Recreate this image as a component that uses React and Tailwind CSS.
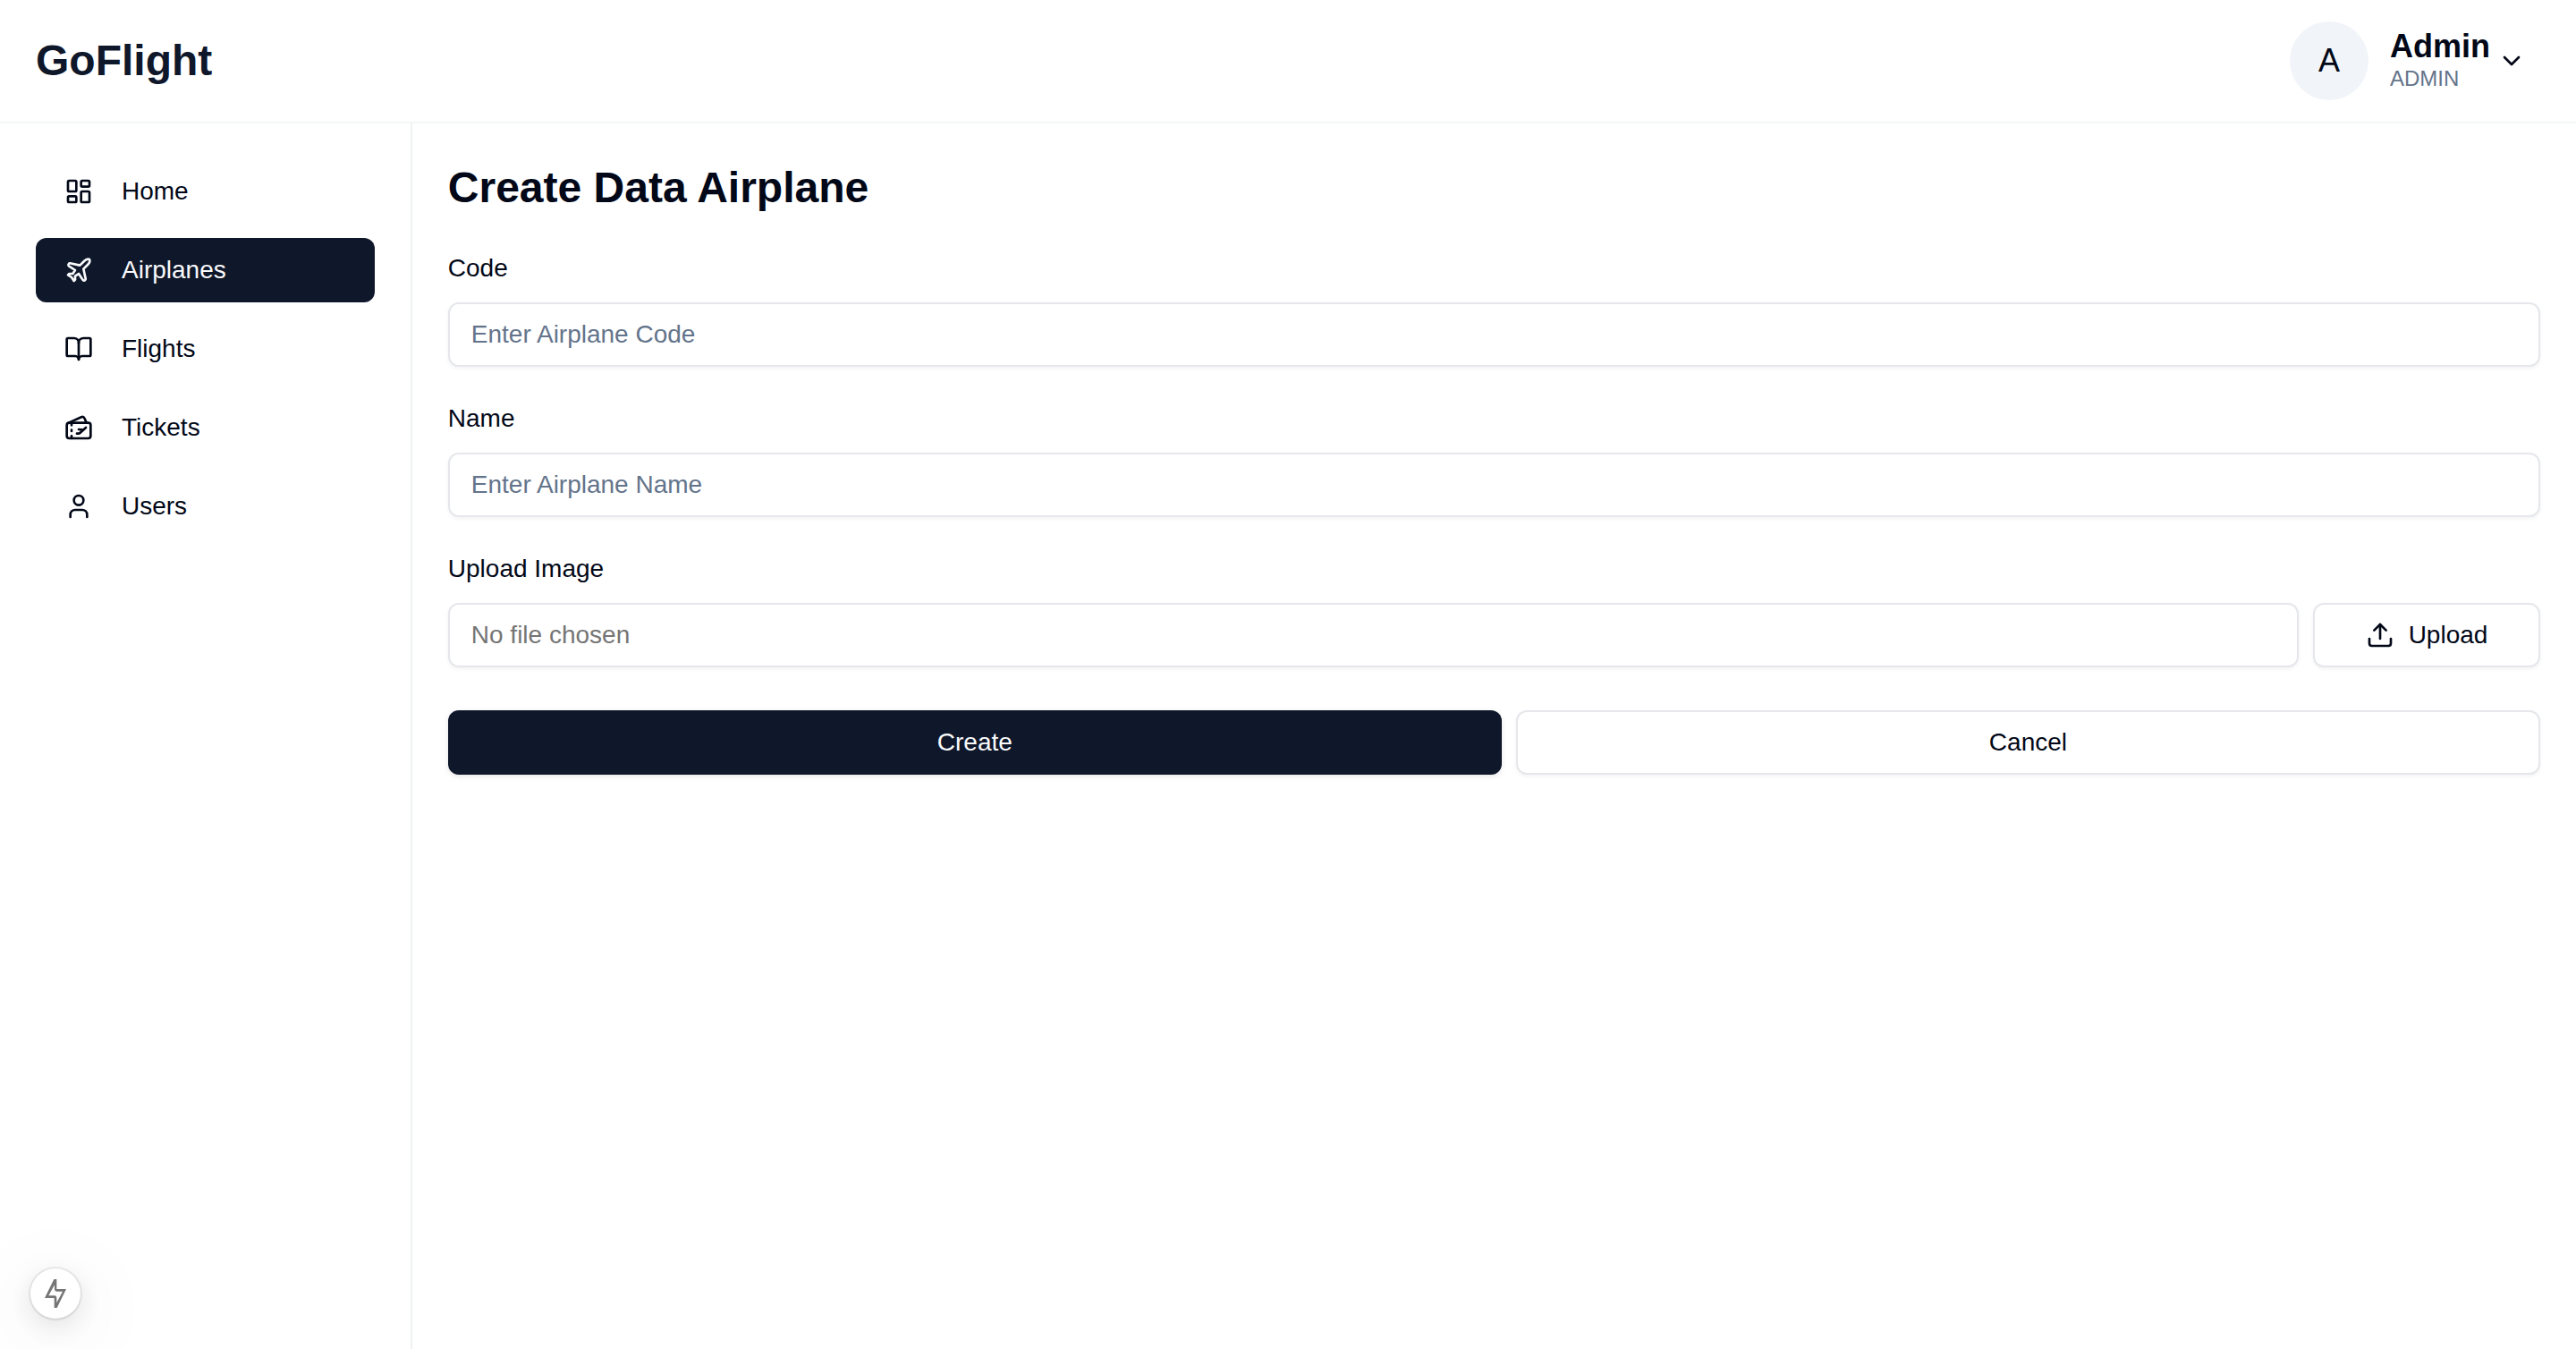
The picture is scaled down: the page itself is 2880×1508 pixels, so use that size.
import { BookOpen, ChevronDown, LayoutDashboard, Plane, TicketsPlane, Upload, User } from "lucide-react";

const links = [
  { label: "Home", icon: LayoutDashboard },
  { label: "Airplanes", icon: Plane, active: true },
  { label: "Flights", icon: BookOpen },
  { label: "Tickets", icon: TicketsPlane },
  { label: "Users", icon: User },
];

const outlined = "border-2 border-[#e5e7eb] bg-white shadow-[0_2px_4px_rgba(0,0,0,0.05)]";

function Header() {
  return (
    <header className="flex items-center justify-between border-b-2 border-[#f3f5f7] py-6 pr-14 pl-10">
      <a href="#home" className="text-[48px] leading-16 font-bold text-[#0f172a]">
        GoFlight
      </a>
      <button type="button" className="flex items-center text-left">
        <span className="mr-6 flex size-22 items-center justify-center rounded-full bg-slate-100 text-[36px] leading-10">
          A
        </span>
        <span className="mr-2 flex flex-col">
          <span className="text-[36px] leading-10 font-bold">Admin</span>
          <span className="text-[24px] leading-8 text-[#64748b]">ADMIN</span>
        </span>
        <ChevronDown className="size-8" />
      </button>
    </header>
  );
}

function Sidebar() {
  return (
    <aside className="w-[16%] shrink-0 border-r-2 border-[#eff1f3] p-10">
      <nav className="flex flex-col gap-4">
        {links.map(({ label, icon: Icon, active }) => (
          <a
            key={label}
            href={`#${label.toLowerCase()}`}
            aria-current={active ? "page" : undefined}
            className={`flex h-18 items-center gap-8 rounded-xl px-8 text-[28px] leading-10 ${
              active ? "bg-[#0f172a] text-slate-50" : ""
            }`}
          >
            <Icon className="size-8" />
            {label}
          </a>
        ))}
      </nav>
    </aside>
  );
}

function Field({ id, label, placeholder, tone = "placeholder:text-[#64748b]", readOnly, children }) {
  return (
    <div>
      <label htmlFor={id} className="mb-5 block text-[28px] leading-9">
        {label}
      </label>
      <div className="flex gap-4">
        <input
          id={id}
          type="text"
          placeholder={placeholder}
          readOnly={readOnly}
          className={`h-18 min-w-0 flex-1 rounded-xl px-6 text-[28px] leading-10 ${outlined} ${tone}`}
        />
        {children}
      </div>
    </div>
  );
}

function DevIndicator() {
  return (
    <button
      type="button"
      aria-label="Open developer tools"
      className="fixed bottom-[34px] left-[34px] flex size-14 items-center justify-center rounded-full bg-white shadow-[0_0_0_2px_rgba(0,0,0,0.07),0_2px_4px_rgba(0,0,0,0.04),0_8px_32px_rgba(0,0,0,0.12),0_16px_96px_rgba(0,0,0,0.1)]"
    >
      <svg viewBox="0 0 72 96" className="h-8 w-6" fill="#757575" fillRule="evenodd" aria-hidden="true">
        <path d="M31 0h9v33h32L41 96h-9V63H0ZM33 19 13 55h20q7 0 7 7v17L60 41H40q-7 0-7-7Z" />
      </svg>
    </button>
  );
}

export default function App() {
  return (
    <div className="flex min-h-screen flex-col bg-white font-['Liberation_Sans',Arial,sans-serif] text-[#020817]">
      <Header />
      <div className="flex flex-1">
        <Sidebar />
        <main className="min-w-0 flex-1 p-10">
          <h1 className="mb-10 text-[48px] leading-16 font-bold">Create Data Airplane</h1>
          <form className="flex flex-col gap-10" onSubmit={(e) => e.preventDefault()}>
            <Field id="code" label="Code" placeholder="Enter Airplane Code" />
            <Field id="name" label="Name" placeholder="Enter Airplane Name" />
            <Field
              id="image"
              label="Upload Image"
              placeholder="No file chosen"
              tone="placeholder:text-[#757575]"
              readOnly
            >
              <button
                type="button"
                className={`flex h-18 w-[254px] items-center justify-center gap-4 rounded-xl text-[28px] leading-10 ${outlined}`}
              >
                <Upload className="size-8" />
                Upload
              </button>
            </Field>
            <div className="mt-2 flex gap-4 text-[28px] leading-10">
              <button
                type="submit"
                className="h-18 flex-[1178] rounded-xl bg-[#0f172a] text-slate-50 shadow-[0_2px_6px_rgba(0,0,0,0.1)]"
              >
                Create
              </button>
              <button type="button" className={`h-18 flex-[1141] rounded-xl ${outlined}`}>
                Cancel
              </button>
            </div>
          </form>
        </main>
      </div>
      <DevIndicator />
    </div>
  );
}
